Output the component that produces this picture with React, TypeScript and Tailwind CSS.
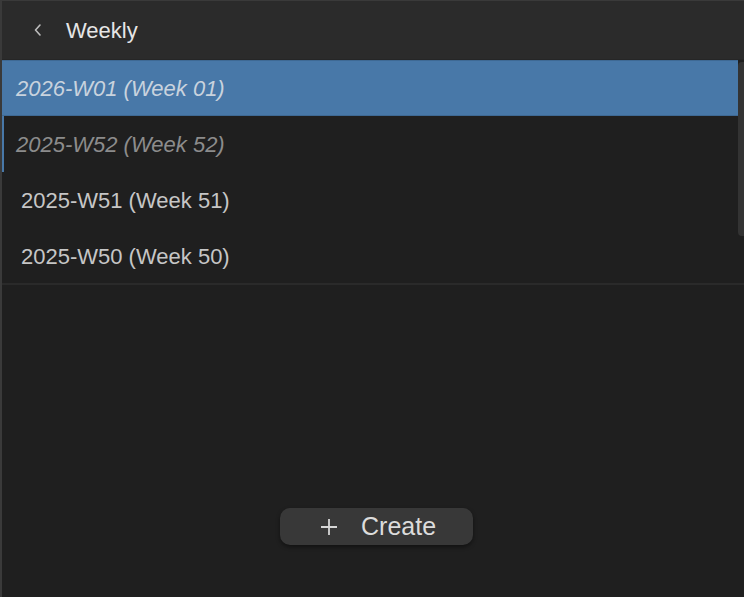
import React from "react";

const rows = [
  { label: "2026-W01 (Week 01)", kind: "selected" },
  { label: "2025-W52 (Week 52)", kind: "focused" },
  { label: "2025-W51 (Week 51)", kind: "normal" },
  { label: "2025-W50 (Week 50)", kind: "normal" },
];

export default function App() {
  return (
    <div
      className="w-[744px] h-[597px] flex flex-col bg-[#1f1f1f] border-l-2 border-t border-l-[#3a3a3a] border-t-[#3a3a3a] overflow-hidden"
      style={{ fontFamily: '"Liberation Sans", Arial, sans-serif' }}
    >
      <div className="h-[59px] shrink-0 bg-[#2b2b2b] flex items-center border-b border-[#262626]">
        <div className="w-[64px] flex justify-center pl-[8px]">
          <svg width="10" height="16" viewBox="0 0 10 16" fill="none">
            <path d="M7 3 L2.5 8 L7 13" stroke="#bdbdbd" strokeWidth="1.6" strokeLinecap="round" strokeLinejoin="round" />
          </svg>
        </div>
        <span className="text-[22px] text-[#e6e6e6]">Weekly</span>
      </div>
      <div className="relative flex flex-col shrink-0">
        {rows.map((r) => {
          if (r.kind === "selected") {
            return (
              <div key={r.label} className="h-[56px] flex items-center pl-[14px] mr-[6px] bg-[#4878a8] border-y border-[#3e6994]">
                <span className="italic text-[22px] text-[#c9d3de]">{r.label}</span>
              </div>
            );
          }
          if (r.kind === "focused") {
            return (
              <div key={r.label} className="h-[56px] flex items-center pl-[12px] border-l-[2px] border-[#4878a8] mr-[6px]">
                <span className="italic text-[22px] text-[#8c8c8c]">{r.label}</span>
              </div>
            );
          }
          return (
            <div key={r.label} className="h-[56px] flex items-center pl-[19px]">
              <span className="text-[22px] text-[#c6c6c6]">{r.label}</span>
            </div>
          );
        })}
        <div className="absolute right-0 top-[2px] w-[6px] h-[174px] rounded-l-[4px] bg-[#333333]" />
      </div>
      <div className="h-[2px] bg-[#2a2a2a] shrink-0 -mt-[1px]" />
      <div className="flex-1 flex flex-col items-center justify-end pb-[52px]">
        <button className="ml-[7px] w-[193px] h-[37px] rounded-[10px] bg-[#383838] shadow-[0_2px_4px_rgba(0,0,0,0.45)] flex items-center pl-[40px] gap-[23px]">
          <svg width="18" height="18" viewBox="0 0 18 18">
            <path d="M9 1 V17 M1 9 H17" stroke="#d6d6d6" strokeWidth="1.8" />
          </svg>
          <span className="text-[25px] text-[#dcdcdc]">Create</span>
        </button>
      </div>
    </div>
  );
}
